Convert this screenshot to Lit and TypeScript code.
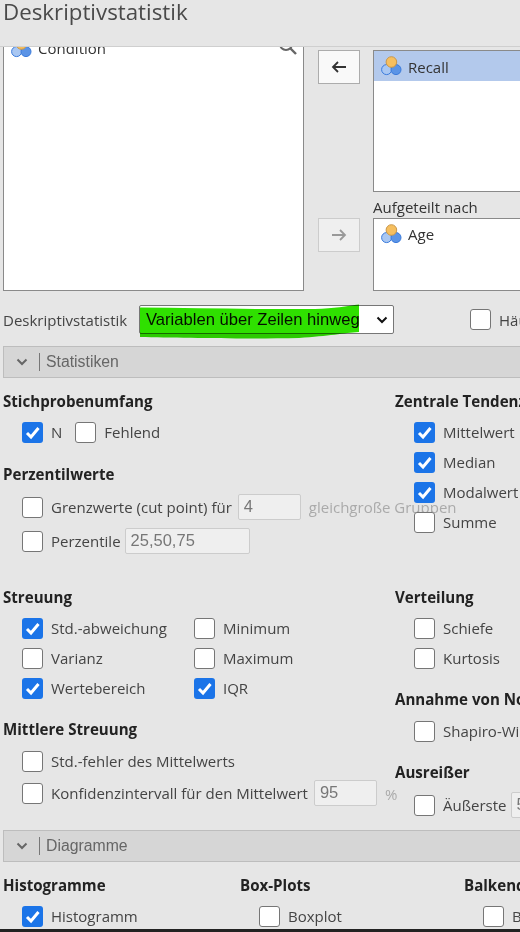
import { LitElement, html, css } from "lit";
import { customElement } from "lit/decorators.js";

const varIcon = () => html`<svg class="vi" viewBox="0 0 21 20" width="21" height="20">
  <circle cx="5.6" cy="13.6" r="5" fill="#a9c7f2" stroke="#3b7bdc" stroke-width="1"/>
  <circle cx="15" cy="13.6" r="5" fill="#5b94e6" stroke="#3b7bdc" stroke-width="1"/>
  <circle cx="10.4" cy="6" r="5.3" fill="#f6bf5f" stroke="#c9974a" stroke-width="1"/>
</svg>`;

const cb = (label: string, on = false) => html`<label class="cb">
  <span class="box ${on ? "on" : ""}">${on
    ? html`<svg viewBox="0 0 21 21" width="21" height="21"><path d="M5 11l4 4 7.5-9" fill="none" stroke="#fff" stroke-width="3"/></svg>`
    : ""}</span>${label ? html`<span>${label}</span>` : ""}
</label>`;

const chevron = (cls: string) => html`<svg class=${cls} viewBox="0 0 12 8" width="12" height="8"><path d="M1.5 1.5L6 6l4.5-4.5" fill="none" stroke="currentColor" stroke-width="2"/></svg>`;

@customElement("app-root")
export class AppRoot extends LitElement {
  static styles = css`
    :host {
      display: block; position: relative; width: 520px; height: 932px; overflow: hidden;
      background: #e6e6e6; color: #444;
      font-family: "Open Sans", "Noto Sans", sans-serif; font-size: 15px;
    }
    .page { width: 600px; }
    .header {
      box-sizing: border-box; height: 47px; border-bottom: 1px solid #cfcfcf;
      font-size: 22.3px; line-height: 23px; padding-left: 3px; color: #4a4a4a; overflow: hidden;
    }
    .supplier { display: grid; grid-template-columns: 301px 42px 200px; column-gap: 14px; height: 244px; margin-left: 3px; }
    .list { background: #fff; border: 1px solid #8a8a8a; box-sizing: border-box; overflow: hidden; position: relative; }
    .all { border-top: none; }
    .item { display: flex; align-items: center; gap: 6px; height: 30px; padding-left: 7px; color: #333; }
    .clipped { margin-top: -14px; }
    .sel { background: #b3c9ec; }
    .sel span { padding-top: 2px; }
    .search { position: absolute; right: 5px; top: -11px; }
    .btns { display: flex; flex-direction: column; gap: 134px; padding-top: 3px; }
    .btn { height: 34px; background: #f9f9f9; border: 1px solid #acacac; box-sizing: border-box; display: flex; align-items: center; justify-content: center; }
    .btn.off { background: #efefef; border-color: #ccc; }
    .rights { display: flex; flex-direction: column; padding-top: 3px; margin-left: -1px; }
    .r1 { height: 142px; }
    .r2 { height: 73px; }
    .cap { height: 26px; line-height: 30px; color: #333; white-space: nowrap; }
    .mode { display: flex; align-items: center; height: 29px; margin: 14px 0 12px 3px; white-space: nowrap; }
    .mode-label { width: 136px; flex: none; }
    .select {
      position: relative; flex: none; width: 255px; height: 29px; box-sizing: border-box; background: #fff; border: 1px solid #767676; border-radius: 2px;
      font-family: "Liberation Sans", Arial, sans-serif; font-size: 16.6px; line-height: 27px; padding-left: 6px; color: #111;
    }
    .select .chev { position: absolute; left: 236px; top: 10px; color: #111; }
    .marker { position: absolute; left: -1px; top: -2px; mix-blend-mode: multiply; pointer-events: none; }
    .freq { margin-left: 76px; flex: none; }
    .bar {
      height: 32px; margin-left: 3px; box-sizing: border-box; background: #d6d6d6; border: 1px solid #bdbdbd;
      display: flex; align-items: center; color: #666; font-family: "Liberation Sans", Arial, sans-serif; font-size: 15.8px;
    }
    .bar .chev { margin-left: 12px; color: #666; }
    .bar .sep { width: 1px; height: 18px; background: #777; margin: 0 6px 0 11px; }
    .bar span { line-height: 18px; }
    .stats { display: grid; grid-template-columns: 392px 1fr; margin-left: 3px; padding-top: 13px; }
    .col { min-width: 0; white-space: nowrap; }
    h3 { margin: 0; font-size: 15.1px; line-height: 20px; height: 20px; font-weight: 700; color: #222; }
    .rows { display: grid; padding-left: 19px; }
    .row { display: flex; align-items: center; height: 30px; }
    .cb { display: inline-flex; align-items: center; gap: 8px; height: 30px; }
    .spacer { width: 13px; flex: none; }
    .box { width: 21px; height: 21px; flex: none; box-sizing: border-box; border: 1px solid #767676; border-radius: 3px; background: #fff; overflow: hidden; }
    .box.on { background: #1b74e8; border: none; border-radius: 3px; }
    .box svg { display: block; }
    .input {
      box-sizing: border-box; height: 26px; background: #efefef; border: 1px solid #ccc; border-radius: 2px;
      font-family: "Liberation Sans", Arial, sans-serif; font-size: 16.5px; line-height: 22px; padding-left: 5px; color: #777; flex: none;
    }
    .w63 { width: 63px; margin-left: 6px; }
    .w125 { width: 125px; margin-left: 4px; }
    .tight { margin-left: 4px; }
    .hint { color: #aaa; margin-left: 8px; }
    .pct { color: #aaa; margin-left: 8px; padding-top: 2px; }
    .gap6 { margin-top: 6px; }
    .m7 { margin-top: 7px; } .m8 { margin-top: 8px; } .m4 { margin-top: 4px; } .m2 { margin-top: 2px; }
    .m16 { margin-top: 16px; } .m17 { margin-top: 17px; } .m31 { margin-top: 31px; } .m50 { margin-top: 50px; }
    .two { display: grid; grid-template-columns: 172px 172px; padding-left: 19px; }
    .bar2 { margin-top: 10px; }
    .plots { display: grid; grid-template-columns: 237px 224px 100px; margin-left: 3px; padding-top: 13px; white-space: nowrap; }
    .foot { position: absolute; left: 0; right: 0; bottom: 0; height: 3px; background: #222; }
  `;

  render() {
    return html`<div class="page">
      <div class="header">Deskriptivstatistik</div>
      <div class="supplier">
        <div class="list all">
          <div class="item clipped">${varIcon()}<span>Condition</span></div>
          <svg class="search" viewBox="0 0 20 20" width="20" height="20"><circle cx="8" cy="8" r="6" fill="none" stroke="#666" stroke-width="2"/><path d="M12.5 12.5L18 18" stroke="#666" stroke-width="2.4"/></svg>
        </div>
        <div class="btns">
          <div class="btn"><svg viewBox="0 0 16 14" width="16" height="14"><path d="M15 7H2M7 2L2 7l5 5" fill="none" stroke="#333" stroke-width="1.8"/></svg></div>
          <div class="btn off"><svg viewBox="0 0 16 14" width="16" height="14"><path d="M1 7h13M9 2l5 5-5 5" fill="none" stroke="#999" stroke-width="1.8"/></svg></div>
        </div>
        <div class="rights">
          <div class="list r1"><div class="item sel">${varIcon()}<span>Recall</span></div></div>
          <div class="cap">Aufgeteilt nach</div>
          <div class="list r2"><div class="item">${varIcon()}<span>Age</span></div></div>
        </div>
      </div>
      <div class="mode">
        <span class="mode-label">Deskriptivstatistik</span>
        <div class="select">Variablen über Zeilen hinweg${chevron("chev")}
          <svg class="marker" width="222" height="35" viewBox="0 0 222 35"><path d="M1 3.5C60 4 120 5.5 176 5C195 4.5 208 2 220 0.5V28C205 29 190 32 160 34C110 35 40 34 1 33Z" fill="#2fe000"/></svg>
        </div>
        <div class="freq">${cb("Häufigkeitstabellen")}</div>
      </div>
      <div class="bar">${chevron("chev")}<i class="sep"></i><span>Statistiken</span></div>
      <div class="stats">
        <div class="col">
          <h3>Stichprobenumfang</h3>
          <div class="rows gap6"><div class="row">${cb("N", true)}<span class="spacer"></span>${cb("Fehlend")}</div></div>
          <h3 class="m17">Perzentilwerte</h3>
          <div class="rows m8">
            <div class="row">${cb("Grenzwerte (cut point) für")}<div class="input w63">4</div><span class="hint">gleichgroße Gruppen</span></div>
            <div class="row m4">${cb("Perzentile")}<div class="input w125">25,50,75</div></div>
          </div>
          <h3 class="m31">Streuung</h3>
          <div class="two gap6">
            ${cb("Std.-abweichung", true)}${cb("Minimum")}
            ${cb("Varianz")}${cb("Maximum")}
            ${cb("Wertebereich", true)}${cb("IQR", true)}
          </div>
          <h3 class="m16">Mittlere Streuung</h3>
          <div class="rows m7">
            <div class="row">${cb("Std.-fehler des Mittelwerts")}</div>
            <div class="row m2">${cb("Konfidenzintervall für den Mittelwert")}<div class="input w63">95</div><span class="pct">%</span></div>
          </div>
        </div>
        <div class="col">
          <h3>Zentrale Tendenz</h3>
          <div class="rows gap6">
            ${cb("Mittelwert", true)}${cb("Median", true)}${cb("Modalwert", true)}${cb("Summe")}
          </div>
          <h3 class="m50">Verteilung</h3>
          <div class="rows gap6">${cb("Schiefe")}${cb("Kurtosis")}</div>
          <h3 class="m16">Annahme von Normalität</h3>
          <div class="rows m7">${cb("Shapiro-Wilk")}</div>
          <h3 class="m16">Ausreißer</h3>
          <div class="rows m8"><div class="row">${cb("Äußerste")}<div class="input w63 tight">5</div></div></div>
        </div>
      </div>
      <div class="bar bar2">${chevron("chev")}<i class="sep"></i><span>Diagramme</span></div>
      <div class="plots">
        <div><h3>Histogramme</h3><div class="rows gap6">${cb("Histogramm", true)}</div></div>
        <div><h3>Box-Plots</h3><div class="rows gap6">${cb("Boxplot")}</div></div>
        <div><h3>Balkendiagramm</h3><div class="rows gap6">${cb("Balkendiagramm")}</div></div>
      </div>
    </div>
    <div class="foot"></div>`;
  }
}
